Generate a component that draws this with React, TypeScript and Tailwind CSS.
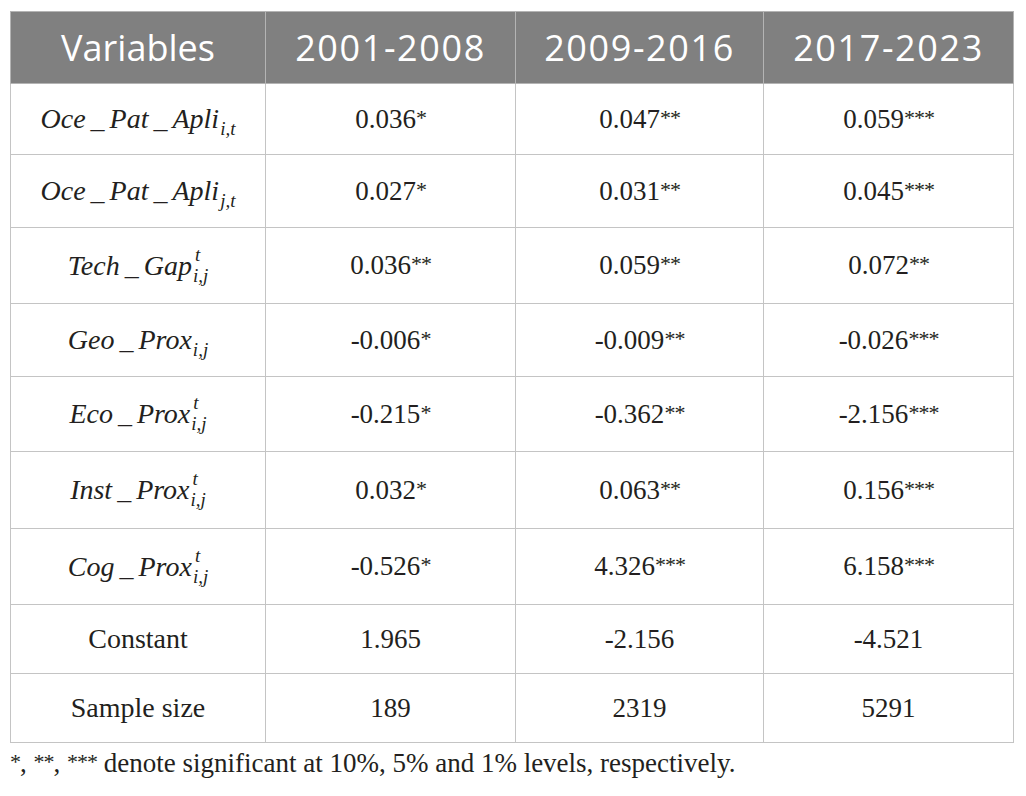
import React from "react";

const serif = { fontFamily: '"Liberation Serif", "Times New Roman", serif' };

function Var({ name, sub, sup }: { name: string; sub: string; sup?: string }) {
  const parts = name.split("_");
  return (
    <span className="italic whitespace-nowrap">
      {parts.map((p, i) => (
        <React.Fragment key={i}>
          {i > 0 && <span className="mx-[5px]">_</span>}
          {p}
        </React.Fragment>
      ))}
      <span className="relative inline-block ml-[1px]">
        <span className="relative top-[7px] text-[19px]">{sub}</span>
        {sup && <span className="absolute left-[2px] -top-[4px] text-[19px]">{sup}</span>}
      </span>
    </span>
  );
}

function Num({ v }: { v: string }) {
  const m = v.match(/^([^*]*)(\**)$/);
  const base = m ? m[1] : v;
  const stars = m ? m[2] : "";
  return (
    <span className="whitespace-nowrap">
      {base}
      {stars && <span className="relative -top-[3px] text-[22px] tracking-[-1px]">{stars}</span>}
    </span>
  );
}

type Row = { label: React.ReactNode; vals: string[]; h: string };

const rows: Row[] = [
  { label: <Var name="Oce_Pat_Apli" sub="i,t" />, vals: ["0.036*", "0.047**", "0.059***"], h: "h-[71px]" },
  { label: <Var name="Oce_Pat_Apli" sub="j,t" />, vals: ["0.027*", "0.031**", "0.045***"], h: "h-[73px]" },
  { label: <Var name="Tech_Gap" sub="i,j" sup="t" />, vals: ["0.036**", "0.059**", "0.072**"], h: "h-[76px]" },
  { label: <Var name="Geo_Prox" sub="i,j" />, vals: ["-0.006*", "-0.009**", "-0.026***"], h: "h-[73px]" },
  { label: <Var name="Eco_Prox" sub="i,j" sup="t" />, vals: ["-0.215*", "-0.362**", "-2.156***"], h: "h-[75px]" },
  { label: <Var name="Inst_Prox" sub="i,j" sup="t" />, vals: ["0.032*", "0.063**", "0.156***"], h: "h-[77px]" },
  { label: <Var name="Cog_Prox" sub="i,j" sup="t" />, vals: ["-0.526*", "4.326***", "6.158***"], h: "h-[76px]" },
  { label: "Constant", vals: ["1.965", "-2.156", "-4.521"], h: "h-[69px]" },
  { label: "Sample size", vals: ["189", "2319", "5291"], h: "h-[69px]" },
];

export default function App() {
  return (
    <div className="w-[1026px] h-[796px] bg-white pt-[11px] pl-[10px] text-[#231f20]" style={serif}>
      <table className="table-fixed border-collapse w-[1003px] text-[28px]">
        <colgroup>
          <col className="w-[255px]" />
          <col className="w-[250px]" />
          <col className="w-[248px]" />
          <col className="w-[250px]" />
        </colgroup>
        <thead>
          <tr className="h-[72px] bg-[#808080] text-white text-[36px] leading-none" style={{ fontFamily: '"Open Sans", "Noto Sans", sans-serif' }}>
            {["Variables", "2001-2008", "2009-2016", "2017-2023"].map((t, i) => (
              <th key={t} className={`border border-[#b4b4b4] font-normal text-center align-middle p-0 ${i > 0 ? "tracking-[1.6px]" : ""}`}>
                {t}
              </th>
            ))}
          </tr>
        </thead>
        <tbody>
          {rows.map((r, i) => (
            <tr key={i} className={r.h}>
              <td className="border border-[#c4c4c4] text-center align-middle p-0">{r.label}</td>
              {r.vals.map((v, j) => (
                <td key={j} className="border border-[#c4c4c4] text-center align-middle p-0 text-[27px]">
                  <Num v={v} />
                </td>
              ))}
            </tr>
          ))}
        </tbody>
      </table>
      <p className="mt-[2px] text-[27px] leading-[36px]">
        <span className="relative -top-[3px] text-[22px] tracking-[-1px]">*</span>,{" "}
        <span className="relative -top-[3px] text-[22px] tracking-[-1px]">**</span>,{" "}
        <span className="relative -top-[3px] text-[22px] tracking-[-1px]">***</span> denote significant at 10%, 5% and 1% levels, respectively.
      </p>
    </div>
  );
}
